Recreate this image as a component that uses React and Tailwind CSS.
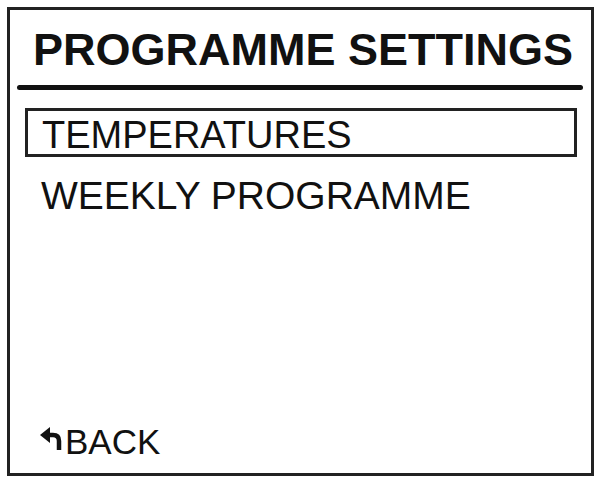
import React from "react";

const BackArrow = () => (
  <svg width="24" height="23" viewBox="0 0 24 23" className="shrink-0 mb-[6px]">
    <polygon points="0,8 10,0 10,16" fill="#111" />
    <path d="M8 8 H13 Q19 8 19 14 V23" stroke="#111" strokeWidth="4.5" fill="none" />
  </svg>
);

export default function App() {
  return (
    <div className="w-[601px] h-[482px] bg-white pt-[7px] pl-[7px] [font-family:'Liberation_Sans',Arial,sans-serif] text-[#111]">
      <div className="w-[587px] h-[469px] border-[3px] border-[#222] flex flex-col">
        {/* Title */}
        <div className="pt-[17px] pl-[23px] text-[45px] font-bold leading-none whitespace-nowrap">
          PROGRAMME SETTINGS
        </div>
        <div className="mt-[13px] ml-[7px] mr-[8px] h-[5px] bg-[#111] rounded-full"></div>

        {/* Menu */}
        <div className="mt-[18px] ml-[15px] w-[552px] h-[49px] border-[3px] border-[#222] pt-[5px] pl-[14px] text-[38px] leading-none whitespace-nowrap">
          TEMPERATURES
        </div>
        <div className="mt-[19px] ml-[31px] text-[39px] leading-none whitespace-nowrap">
          WEEKLY PROGRAMME
        </div>

        {/* Back */}
        <div className="mt-auto mb-[14px] ml-[30px] flex items-center gap-[1px]">
          <BackArrow />
          <span className="text-[35px] leading-none">BACK</span>
        </div>
      </div>
    </div>
  );
}
